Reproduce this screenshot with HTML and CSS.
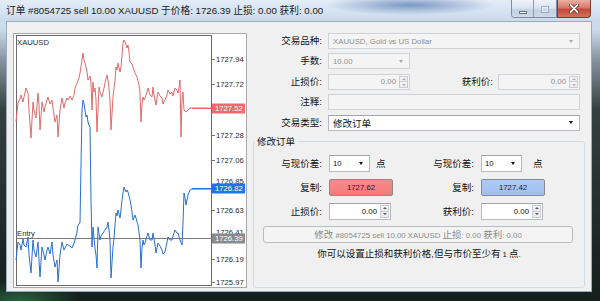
FILE: index.html
```html
<!DOCTYPE html>
<html>
<head>
<meta charset="utf-8">
<title>订单</title>
<link rel="stylesheet" href="styles.css">
</head>
<body>
<div class="window">
  <div class="titlebar">
    <div class="title">订单 #8054725 sell 10.00 XAUUSD 于价格: 1726.39 止损: 0.00 获利: 0.00</div>
    <div class="caption-btns">
      <div class="cap-group">
        <span class="cap min"><i></i></span>
        <span class="cap max"><i></i></span>
      </div>
      <span class="cap close">
        <svg width="10" height="9" viewBox="0 0 10 9"><path d="M1.5 1 L8.5 8 M8.5 1 L1.5 8" stroke="#4a1a16" stroke-width="3.2" stroke-linecap="round"/><path d="M1.5 1 L8.5 8 M8.5 1 L1.5 8" stroke="#fff" stroke-width="1.8" stroke-linecap="round"/></svg>
      </span>
    </div>
  </div>
  <div class="client">
    <div class="chart">
      <svg width="232" height="253" viewBox="14 34 232 253">
        <rect x="16.5" y="35.5" width="195" height="250" fill="none" stroke="#6a6a6a"/>
        <text x="17" y="44.5" class="ct">XAUUSD</text>
        <g stroke="#777">
          <line x1="212" x2="215" y1="59.5" y2="59.5"/>
          <line x1="212" x2="215" y1="84.5" y2="84.5"/>
          <line x1="212" x2="215" y1="135.5" y2="135.5"/>
          <line x1="212" x2="215" y1="160.5" y2="160.5"/>
          <line x1="212" x2="215" y1="210.5" y2="210.5"/>
          <line x1="212" x2="215" y1="259.5" y2="259.5"/>
          <line x1="212" x2="215" y1="282.5" y2="282.5"/>
        </g>
        <g class="ct">
          <text x="216" y="62.3">1727.94</text>
          <text x="216" y="87.3">1727.72</text>
          <text x="216" y="138.3">1727.28</text>
          <text x="216" y="163.3">1727.06</text>
          <text x="216" y="184.3">1726.85</text>
          <text x="216" y="213.3">1726.63</text>
          <text x="216" y="235.3">1726.41</text>
          <text x="216" y="262.3">1726.19</text>
          <text x="216" y="285.3">1725.97</text>
        </g>
        <line x1="17" x2="212" y1="238.5" y2="238.5" stroke="#7a7a7a"/>
        <text x="17" y="236" class="ct">Entry</text>
        <polyline fill="none" stroke="#e26a6a" stroke-width="1" points="16,122 18,103 20,99 21,95 23,102 24,97 26,88 28,93 29,110 31,138 33,102 34,110 36,118 38,93 39,105 40,130 42,102 44,112 45,107 47,100 48,97 50,104 52,100 53,108 55,122 57,115 58,137 60,110 62,98 64,108 65,103 67,98 68,100 70,96 72,100 74,95 75,88 77,83 79,78 80,73 82,60 83,53 84,60 86,67 87,72 88,80 90,76 91,83 92,110 93,82 94,92 95,88 96,100 97,132 99,87 100,92 102,97 104,88 105,83 107,75 108,80 109,88 110,100 111,130 113,97 115,80 116,67 117,70 118,63 120,72 121,67 122,55 123,43 124,40 125,42 127,48 128,45 129,52 130,62 132,64 133,67 134,70 135,73 136,75 137,77 139,85 140,93 141,122 142,104 143,97 144,100 145,98 147,92 148,88 150,95 152,97 153,87 154,95 156,105 157,98 158,92 160,96 162,98 163,104 165,100 167,95 168,90 170,94 172,92 173,96 175,88 177,90 178,93 179,88 180,80 181,137 182,100 183,92 184,110 186,112 188,110 190,108 192,108 211,108"/>
        <polyline fill="none" stroke="#2a6fd0" stroke-width="1" points="16,260 18,242 20,245 21,250 23,239 24,245 26,247 28,237 29,255 31,273 33,240 34,250 36,257 38,242 39,260 40,277 42,247 44,255 45,260 47,250 48,247 50,254 52,242 53,255 55,267 57,260 58,282 60,255 62,242 64,250 65,248 67,244 68,245 70,246 72,248 74,243 75,240 77,232 78,225 80,223 81,165 82,110 83,100 84,104 85,110 86,117 87,115 88,122 89,125 90,127 91,200 92,247 93,227 94,238 95,248 96,255 97,268 98,227 100,240 101,236 103,233 105,230 107,227 108,222 109,230 110,240 111,278 113,247 114,238 115,225 116,213 117,216 118,210 120,218 121,210 122,200 123,193 124,187 126,192 127,190 128,192 130,200 131,205 132,212 133,220 135,215 136,218 137,222 138,225 140,240 141,268 142,248 143,240 144,245 145,243 147,236 148,233 150,240 152,240 153,233 155,245 156,253 157,248 158,243 160,246 162,250 163,254 165,252 167,242 168,237 170,240 172,240 173,236 175,230 177,233 178,233 180,240 182,245 183,223 184,193 185,198 186,205 187,200 188,195 190,190 192,189 211,189"/>
        <line x1="192" x2="212" y1="108.5" y2="108.5" stroke="#e26a6a"/>
        <line x1="192" x2="212" y1="188.5" y2="188.5" stroke="#2a6fd0"/>
        <rect x="212" y="103.5" width="33" height="10" fill="#f06a6a"/>
        <text x="215" y="111.3" class="ct lw">1727.52</text>
        <rect x="212" y="183.5" width="33" height="10" fill="#1f74e8"/>
        <text x="215" y="191.3" class="ct lw">1726.82</text>
        <rect x="212" y="233.5" width="33" height="10" fill="#8a8a8a"/>
        <text x="215" y="241.3" class="ct lw">1726.39</text>
      </svg>
    </div>
    <div class="form">
      <div class="fields">
        <span class="lbl">交易品种:</span>
        <div class="box dis"><span class="val">XAUUSD, Gold vs US Dollar</span><span class="drop"><i class="arr grey"></i></span></div>

        <span class="lbl">手数:</span>
        <div class="box dis lots"><span class="val">10.00</span><span class="drop"><i class="arr grey"></i></span></div>

        <span class="lbl">止损价:</span>
        <div class="pair">
          <div class="box dis spin"><span class="val num">0.00</span><span class="arrows"><span class="sb"><i class="up grey"></i></span><span class="sb"><i class="down grey"></i></span></span></div>
          <span class="lbl mid">获利价:</span>
          <div class="box dis spin"><span class="val num">0.00</span><span class="arrows"><span class="sb"><i class="up grey"></i></span><span class="sb"><i class="down grey"></i></span></span></div>
        </div>

        <span class="lbl">注释:</span>
        <div class="box dis"></div>

        <span class="lbl">交易类型:</span>
        <div class="box"><span class="val zh">修改订单</span><span class="drop"><i class="arr"></i></span></div>
      </div>

      <fieldset class="group">
        <legend>修改订单</legend>
        <div class="grid2">
          <span class="lbl">与现价差:</span>
          <div class="cell"><div class="box small"><span class="val">10</span><span class="drop"><i class="arr"></i></span></div><span class="pt">点</span></div>
          <span class="lbl">与现价差:</span>
          <div class="cell"><div class="box small"><span class="val">10</span><span class="drop"><i class="arr"></i></span></div><span class="pt wide">点</span></div>

          <span class="lbl">复制:</span>
          <div class="cell"><button class="copy red">1727.62</button></div>
          <span class="lbl">复制:</span>
          <div class="cell"><button class="copy blue">1727.42</button></div>

          <span class="lbl">止损价:</span>
          <div class="cell"><div class="box spin s2"><span class="val num">0.00</span><span class="arrows"><span class="sb"><i class="up"></i></span><span class="sb"><i class="down"></i></span></span></div></div>
          <span class="lbl">获利价:</span>
          <div class="cell"><div class="box spin s2"><span class="val num">0.00</span><span class="arrows"><span class="sb"><i class="up"></i></span><span class="sb"><i class="down"></i></span></span></div></div>
        </div>
        <button class="modify"><span class="zh">修改</span> #8054725 sell 10.00 XAUUSD <span class="zh">止损</span>: 0.00 <span class="zh">获利</span>: 0.00</button>
        <p class="note"><span class="zh">你可以设置止损和获利价格,但与市价至少有</span> 1 <span class="zh">点</span>.</p>
      </fieldset>
    </div>
  </div>
</div>
</body>
</html>
```

FILE: styles.css
```css
* { box-sizing: border-box; }
html, body { margin: 0; padding: 0; }
body {
  width: 600px;
  height: 301px;
  overflow: hidden;
  font-family: "Liberation Sans", "Noto Sans CJK SC", sans-serif;
  font-size: 7.8px;
  color: #111;
}
.zh { font-size: 9.5px; }

.window {
  width: 600px;
  height: 301px;
  display: flex;
  flex-direction: column;
  background:
    radial-gradient(ellipse 60px 20px at 20px 301px, rgba(60,150,90,.55), transparent),
    linear-gradient(180deg, #d8e5f2 0px, #cbdaea 30px, #8693a0 60px, #34403f 110px, #1b2422 260px, #15201c 301px);
}

/* title bar */
.titlebar {
  height: 22px;
  flex: none;
  display: flex;
  align-items: flex-start;
  background:
    radial-gradient(ellipse 85px 10px at 410px 5px, rgba(70,110,170,.65), rgba(70,110,170,0)),
    linear-gradient(180deg, #e3edf8 0%, #d3e1f0 60%, #c9d9ea 100%);
}
.title {
  flex: 1;
  padding: 5px 0 0 6px;
  font-size: 9.7px;
  line-height: 12px;
  white-space: nowrap;
  color: #1b1b1b;
}
.caption-btns {
  display: flex;
  margin-right: 9px;
  height: 18px;
}
.cap-group {
  display: flex;
  border: 1px solid #7d8ea4;
  border-top: none;
  border-radius: 0 0 0 4px;
  overflow: hidden;
}
.cap {
  display: flex;
  align-items: center;
  justify-content: center;
  height: 18px;
}
.cap.min, .cap.max {
  width: 22px;
  background: linear-gradient(180deg, #eef3f9 0%, #d9e3ee 45%, #c3d1e0 55%, #cfdbe8 100%);
}
.cap.min { border-right: 1px solid #8c9db2; }
.cap.min i {
  width: 8px; height: 3px; margin-top: 6px;
  background: #fff; border: 1px solid #5f6f84;
}
.cap.max i {
  width: 8px; height: 7px;
  border: 1px solid #8f9db0; box-shadow: inset 0 0 0 1px #eef2f7;
  opacity: .8;
}
.cap.close {
  width: 34px;
  border: 1px solid #7a3a32;
  border-top: none;
  border-radius: 0 0 4px 0;
  background: linear-gradient(180deg, #eab0a2 0%, #d77a68 45%, #c24a37 55%, #d4735c 100%);
}

/* client */
.client {
  flex: 1;
  margin: 0 9px 10px 7px;
  background: #f0f0f0;
  display: flex;
  padding: 11px 0 0 6px;
  box-shadow: 0 0 0 1px #9aabbd;
}
.chart {
  width: 234px;
  height: 255px;
  border: 1px solid #a9a9a9;
  background: #fff;
  flex: none;
}
.chart svg { display: block; }
.ct { font-family: "Liberation Sans", sans-serif; font-size: 7.7px; fill: #2a2a2a; }
.ct.lw { fill: #fff; }

/* form */
.form {
  flex: 1;
  margin-left: 6px;
  display: flex;
  flex-direction: column;
}
.fields {
  display: grid;
  grid-template-columns: 69px 252px;
  grid-auto-rows: 16px;
  column-gap: 6px;
  row-gap: 4.4px;
}
.lbl {
  font-size: 9.5px;
  line-height: 16px;
  text-align: right;
  white-space: nowrap;
  color: #111;
}
.box {
  display: flex;
  align-items: center;
  height: 100%;
  background: #fff;
  border: 1px solid #b7bac0;
  border-top-color: #a2a5ab;
  min-width: 0;
}
.box.dis {
  background: #f4f4f4;
  border-color: #cfd2d6;
  color: #8f8f8f;
}
.val {
  flex: 1;
  padding: 0 4px;
  white-space: nowrap;
  overflow: hidden;
}
.val.num { text-align: right; padding-right: 3px; }
.drop {
  width: 16px;
  height: 100%;
  display: flex;
  align-items: center;
  justify-content: center;
}
.arr {
  width: 0; height: 0;
  border-left: 2.5px solid transparent;
  border-right: 2.5px solid transparent;
  border-top: 3px solid #111;
}
.arr.grey { border-top-color: #a8a8a8; }
.lots { width: 82px; }
.pair { display: flex; align-items: stretch; }
.pair .spin { width: 82px; flex: none; }
.lbl.mid { flex: 1; padding-right: 5px; }
.arrows {
  width: 10px;
  height: 100%;
  display: flex;
  flex-direction: column;
  padding: 1px 1px 1px 0;
  gap: 0;
}
.sb {
  flex: 1;
  display: flex;
  align-items: center;
  justify-content: center;
  border: 1px solid #c9ccd2;
  background: linear-gradient(#f8f8f8, #e9eaec);
}
.sb + .sb { border-top: none; }
.up, .down { width: 0; height: 0; border-left: 2px solid transparent; border-right: 2px solid transparent; }
.up { border-bottom: 2px solid #555; }
.down { border-top: 2px solid #555; }
.up.grey { border-bottom-color: #b0b0b0; }
.down.grey { border-top-color: #b0b0b0; }

/* group */
.group {
  flex: 1;
  margin: 5px 6px 3px 0;
  padding: 7px 0 0 0;
  border: 1px solid #d3dbe2;
  border-radius: 3px;
  min-width: 0;
}
.group legend {
  font-size: 9.5px;
  line-height: 12px;
  padding: 0 2px;
  margin-left: 1px;
  color: #111;
}
.grid2 {
  display: grid;
  grid-template-columns: 75px 83px 69px 1fr;
  grid-auto-rows: 17px;
  row-gap: 7px;
}
.grid2 .lbl { padding-right: 7px; line-height: 17px; }
.cell { display: flex; align-items: center; height: 17px; }
.box.small { width: 41px; flex: none; }
.box.small .val { padding-left: 3px; }
.pt { font-size: 9.5px; margin-left: 6px; }
.pt.wide { margin-left: 11px; }
.s2 { width: 62px; flex: none; }
.copy {
  width: 64px;
  height: 17px;
  padding: 0;
  font-family: inherit;
  font-size: 7.8px;
  color: #222;
  border: 1px solid #8a8a8a;
  border-radius: 2px;
}
.copy.red { background: linear-gradient(#f88a8a, #f47a7a); }
.copy.blue { background: linear-gradient(#aecaf6, #9fbef1); }
.modify {
  display: block;
  margin: 6px 0 0 9px;
  width: 310px;
  height: 17px;
  padding: 0;
  font-family: inherit;
  font-size: 7.8px;
  color: #8a8a8a;
  background: #f4f4f4;
  border: 1px solid #b8bcc0;
  border-radius: 3px;
  white-space: nowrap;
}
.note {
  margin: 4px 0 0 0;
  text-align: center;
  line-height: 13px;
  color: #111;
}
```
